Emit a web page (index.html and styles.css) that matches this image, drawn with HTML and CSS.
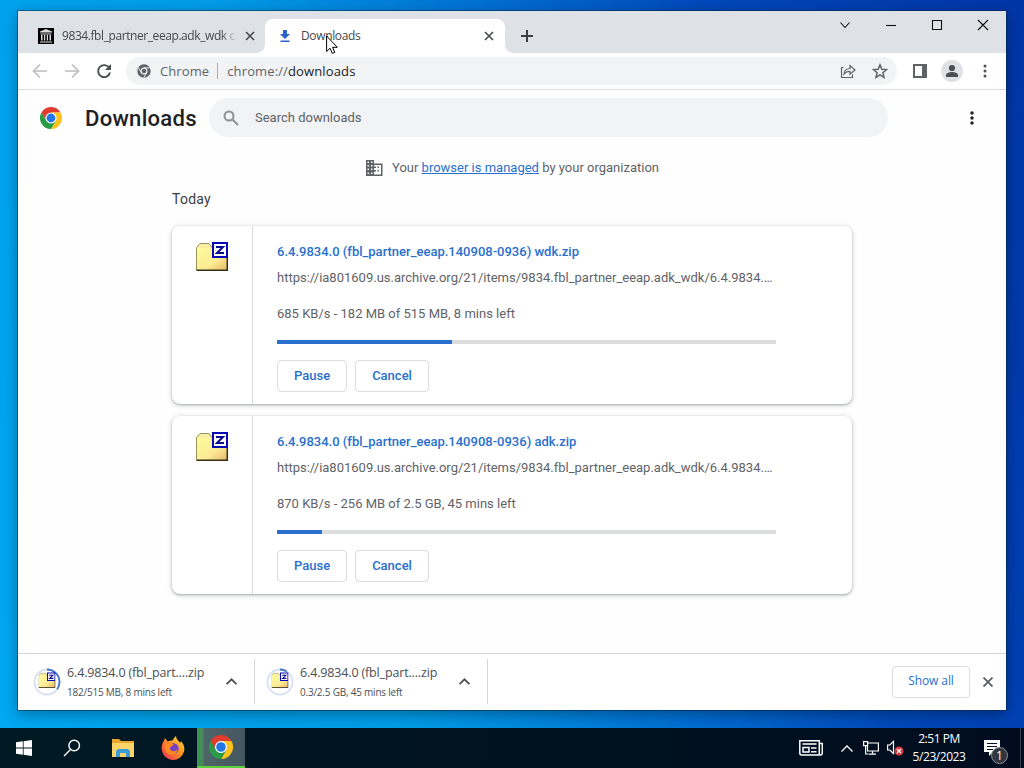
FILE: index.html
```html
<!DOCTYPE html>
<html lang="en">
<head>
<meta charset="UTF-8">
<title>Downloads</title>
<link rel="stylesheet" href="styles.css">
</head>
<body>
<svg class="defs" width="0" height="0">
    <symbol id="chrome" viewBox="0 0 48 48">
        <circle cx="24" cy="24" r="13" fill="#fff"/>
        <path fill="#e33b2e" d="M3.2 12A24 24 0 0 1 44.8 12H24A12 12 0 0 0 13.6 30z"/>
        <path fill="#fcc31e" d="M44.8 12A24 24 0 0 1 24 48L34.4 30A12 12 0 0 0 24 12z"/>
        <path fill="#2a9c46" d="M24 48A24 24 0 0 1 3.2 12L13.6 30A12 12 0 0 0 34.4 30z"/>
        <circle cx="24" cy="24" r="9.6" fill="#2476e8"/>
    </symbol>
    <symbol id="zip" viewBox="0 0 32 32">
        <path fill="#f7efa0" stroke="#99925a" d="M.5 29V6.500L4 2.500h9l3 4v22.500z"/>
        <path fill="url(#folder)" d="M1 7h30v22H1z"/>
        <path fill="none" stroke="#332f16" stroke-width="1.500" d="M.5 29.200h30.800V17"/>
        <path fill="#fff" stroke="#0a0ab4" stroke-width="2" d="M17 2h14v14H17z"/>
        <path fill="none" stroke="#0a0a90" stroke-width="2" d="M20 6h7L21 12h7"/>
    </symbol>
    <linearGradient id="folder" x1="0" y1="0" x2="1" y2="1">
        <stop offset="0" stop-color="#fffb9e"/>
        <stop offset=".6" stop-color="#fbeb94"/>
        <stop offset="1" stop-color="#e8b866"/>
    </linearGradient>
    <linearGradient id="fire" x1="1" y1="0" x2="0" y2="1">
        <stop offset="0" stop-color="#ffe33d"/>
        <stop offset=".45" stop-color="#ff9122"/>
        <stop offset="1" stop-color="#f0255a"/>
    </linearGradient>
</svg>

<div class="window">
    <div class="tabstrip">
        <div class="tab">
            <svg class="favicon" viewBox="0 0 16 16"><path fill="#000" d="M0 0h16v16H0z"/><path fill="#ddd" d="M8 1l6 2.500v1H2v-1zM2.500 5.500h11v1h-11zM3 7h1.500v5.500H3zM6 7h1.200v5.500H6zM8.800 7H10v5.500H8.800zM11.500 7H13v5.500h-1.500zM2 13.500h12v1H2z"/></svg>
            <span class="tab-title faded">9834.fbl_partner_eeap.adk_wdk c</span>
            <svg class="tab-close" viewBox="0 0 10 10"><path d="M1 1l8 8M9 1L1 9"/></svg>
        </div>
        <div class="tab active">
            <svg class="favicon" viewBox="0 0 16 16"><path fill="#2a63c9" d="M6 2h4v4h3L8 11 3 6h3zM3.500 12.500h9V14h-9z"/></svg>
            <span class="tab-title">Downloads</span>
            <svg class="tab-close" viewBox="0 0 10 10"><path d="M1 1l8 8M9 1L1 9"/></svg>
        </div>
        <svg class="new-tab" viewBox="0 0 12 12"><path d="M6 0v12M0 6h12"/></svg>
        <div class="caption">
            <svg viewBox="0 0 12 12"><path d="M1.500 3.500L6 8.500 10.500 3.500"/></svg>
            <svg viewBox="0 0 12 12"><path d="M1 6.500h10"/></svg>
            <svg viewBox="0 0 12 12"><path d="M1.500 1.500h9v9h-9z"/></svg>
            <svg viewBox="0 0 12 12"><path d="M1 1l10 10M11 1L1 11"/></svg>
        </div>
    </div>

    <div class="toolbar">
        <div class="nav">
            <svg class="off" viewBox="0 0 16 16"><path d="M15 8H2M8 1.500L1.500 8 8 14.500"/></svg>
            <svg class="off" viewBox="0 0 16 16"><path d="M1 8h13M8 1.500L14.500 8 8 14.500"/></svg>
            <svg viewBox="0 0 16 16"><path d="M13.300 5A6 6 0 1 0 14 9.500"/><path class="fill" d="M15 1v6H9z"/></svg>
        </div>
        <div class="omnibox">
            <svg class="site" viewBox="0 0 48 48"><circle cx="24" cy="24" r="23" fill="#5f6368"/><path d="M24 13h21M14.500 29.500L4 11.500M33.500 29.500L23 47.500" stroke="#f1f3f4" stroke-width="3"/><circle cx="24" cy="24" r="10" fill="#5f6368" stroke="#f1f3f4" stroke-width="4"/></svg>
            <span class="chip">Chrome</span>
            <span class="url">chrome://<b>downloads</b></span>
            <svg class="share" viewBox="0 0 16 16"><path d="M3.500 4.500h-2v10h11v-3M4 11c.5-4 2.500-5.500 6-5.500V2.500L15 7l-5 4.200V8.300C7.300 8.300 5.500 9 4 11z"/></svg>
            <svg class="star" viewBox="0 0 16 16"><path d="M8 1.800l1.800 4.400 4.700.4-3.600 3.100 1.100 4.600L8 11.800l-4 2.500 1.100-4.600L1.500 6.600l4.700-.4z"/></svg>
        </div>
        <svg class="panel" viewBox="0 0 14 14"><path fill="#5f6368" d="M0 0h14v14H0z"/><path fill="#fff" d="M2 2h7v10H2z"/></svg>
        <svg class="avatar" viewBox="0 0 22 22"><circle cx="11" cy="11" r="11" fill="#dee1e6"/><circle cx="11" cy="8" r="3.100"/><path d="M5 17v-2c0-2 3.500-3 6-3s6 1 6 3v2z"/></svg>
        <svg class="dots" viewBox="0 0 4 14"><circle cx="2" cy="2" r="1.500"/><circle cx="2" cy="7" r="1.500"/><circle cx="2" cy="12" r="1.500"/></svg>
    </div>

    <div class="page">
        <div class="header">
            <svg class="logo"><use href="#chrome"/></svg>
            <h1>Downloads</h1>
            <div class="search">
                <svg viewBox="0 0 16 16"><circle cx="6" cy="6" r="4.500"/><path d="M9.500 9.500l5.500 5.500"/></svg>
                <span>Search downloads</span>
            </div>
            <svg class="dots big" viewBox="0 0 4 14"><circle cx="2" cy="2" r="1.750"/><circle cx="2" cy="7" r="1.750"/><circle cx="2" cy="12" r="1.750"/></svg>
        </div>
        <div class="managed">
            <svg viewBox="0 0 18 16"><path fill="#5f6368" fill-rule="evenodd" d="M1 0h8v3.500h8.500V16H1zM2.500 1.500V3H4V1.500zM6 1.500V3h1.500V1.500zM2.500 5v1.500H4V5zM6 5v1.500h1.500V5zM2.500 8.500V10H4V8.500zM6 8.500V10h1.500V8.500zM2.500 12.500V14H4v-1.500zM6 12.500V14h1.500v-1.500zM9 5v1.500h2V8H9v2h2v1.500H9v3h7V5zM12.500 6.500H14V8h-1.500zM12.500 10H14v1.500h-1.500z"/></svg>
            <span>Your <a>browser is managed</a> by your organization</span>
        </div>
        <div class="list">
            <h3>Today</h3>
            <div class="card">
                <div class="card-icon"><svg><use href="#zip"/></svg></div>
                <div class="card-body">
                    <div class="name">6.4.9834.0 (fbl_partner_eeap.140908-0936) wdk.zip</div>
                    <div class="link">https://ia801609.us.archive.org/21/items/9834.fbl_partner_eeap.adk_wdk/6.4.9834.…</div>
                    <div class="status">685 KB/s - 182 MB of 515 MB, 8 mins left</div>
                    <div class="bar"><div style="width:35%"></div></div>
                    <button>Pause</button><button>Cancel</button>
                </div>
            </div>
            <div class="card">
                <div class="card-icon"><svg><use href="#zip"/></svg></div>
                <div class="card-body">
                    <div class="name">6.4.9834.0 (fbl_partner_eeap.140908-0936) adk.zip</div>
                    <div class="link">https://ia801609.us.archive.org/21/items/9834.fbl_partner_eeap.adk_wdk/6.4.9834.…</div>
                    <div class="status">870 KB/s - 256 MB of 2.5 GB, 45 mins left</div>
                    <div class="bar"><div style="width:9%"></div></div>
                    <button>Pause</button><button>Cancel</button>
                </div>
            </div>
        </div>
    </div>

    <div class="shelf">
        <div class="shelf-item">
            <svg class="ring" viewBox="0 0 28 28"><circle cx="14" cy="14" r="12.500"/><circle class="done" cx="14" cy="14" r="12.500" pathLength="100" stroke-dasharray="35 100" transform="rotate(-90 14 14)"/><use href="#zip" x="5.500" y="4" width="17" height="17"/></svg>
            <div class="shelf-text"><div class="s-name">6.4.9834.0 (fbl_part....zip</div><div class="s-info">182/515 MB, 8 mins left</div></div>
            <svg class="chevron" viewBox="0 0 10 6"><path d="M.5 5.500L5 1l4.500 4.500"/></svg>
        </div>
        <div class="shelf-item">
            <svg class="ring" viewBox="0 0 28 28"><circle cx="14" cy="14" r="12.500"/><circle class="done" cx="14" cy="14" r="12.500" pathLength="100" stroke-dasharray="9 100" transform="rotate(-90 14 14)"/><use href="#zip" x="5.500" y="4" width="17" height="17"/></svg>
            <div class="shelf-text"><div class="s-name">6.4.9834.0 (fbl_part....zip</div><div class="s-info">0.3/2.5 GB, 45 mins left</div></div>
            <svg class="chevron" viewBox="0 0 10 6"><path d="M.5 5.500L5 1l4.500 4.500"/></svg>
        </div>
        <button class="show-all">Show all</button>
        <svg class="shelf-close" viewBox="0 0 10 10"><path d="M.5 .5l9 9M9.500 .5l-9 9"/></svg>
    </div>
</div>

<div class="taskbar">
    <div class="task"><svg width="16" height="16" viewBox="0 0 16 16"><path fill="#fff" d="M0 2.300l6.800-1v6.200H0zM7.600 1.200L16 0v7.500H7.600zM0 8.400h6.800v6.300L0 13.700zM7.600 8.400H16V16l-8.400-1.200z"/></svg></div>
    <div class="task"><svg width="18" height="18" viewBox="0 0 18 18"><path fill="none" stroke="#fff" stroke-width="1.400" d="M7 11L1 17M16.500 6.500a5.300 5.300 0 1 1-10.600 0 5.300 5.300 0 0 1 10.600 0z"/></svg></div>
    <div class="task wide"><svg width="22" height="18" viewBox="0 0 22 18"><path fill="#e9a82d" d="M0 0h7l2 2h13v16H0z"/><path fill="#fad468" d="M0 4h22v14H0z"/><path fill="#3c9bd9" d="M4 18v-6l2-2h10l2 2v6h-4v-4H8v4z"/></svg></div>
    <div class="task"><svg width="24" height="24" viewBox="0 0 24 24"><path fill="url(#fire)" d="M11.500 4.500C12.500 2 14 1 15 0c0 3 2.500 4.500 4.200 7l.8-2c3 3.500 4 7 3 10.500A11.300 11.300 0 0 1 1 15C0 11 1 7.500 3 4.500L4 2l2.800 3.500c1.500-.8 3-1 4.700-1z"/><circle cx="12.500" cy="12.500" r="5.200" fill="#7541c8"/><path fill="#ff8a20" d="M4 8.500c2.500-1.500 4-.8 7-.5 2 0 1.500 1.800-.5 2.300-1.500.5-2 2-1 3.500 1.500 2 4.500 2 7-.3-.5 4-4.500 6-8.500 4.500S3 13 4 8.500z"/></svg></div>
    <div class="task current"><svg width="24" height="24"><use href="#chrome"/></svg></div>
    <div class="tray">
        <svg width="24" height="16" viewBox="0 0 24 16"><path fill="none" stroke="#fff" stroke-width="1.500" d="M.8 .8h19.500V15H2.500Q.8 15 .8 13zM20.300 3.500h3V13q0 2-2 2h-2M3.500 4h14M4 7.500h6v4.500H4zM12 8h5.500M12 11.800h5.500"/></svg>
        <svg class="up" width="12" height="7" viewBox="0 0 12 7"><path fill="none" stroke="#fff" stroke-width="1.300" d="M.5 6.500L6 1l5.500 5.500"/></svg>
        <svg class="net" width="16" height="14" viewBox="0 0 16 14"><path fill="none" stroke="#fff" stroke-width="1.200" d="M5 2h10.400v8H4.500V5M9.500 10v3M6 13.200h7M.6 .6h4v4h-4zM2.600 5v8h3"/></svg>
        <svg class="sound" width="17" height="16" viewBox="0 0 17 16"><path fill="none" stroke="#fff" stroke-width="1.200" d="M.6 5h2.200L6.500 1.500v12L2.800 10H.6z"/><circle cx="12" cy="11" r="4.500" fill="#d93a41"/><path stroke="#fff" stroke-width="1.200" d="M10 9l4 4M14 9l-4 4"/></svg>
        <div class="clock"><div>2:51 PM</div><div>5/23/2023</div></div>
        <div class="notify">
            <svg width="16" height="16" viewBox="0 0 16 16"><path fill="#fff" d="M0 0h16v12H9l-4 4v-4H0z"/><path stroke="#00101d" d="M3 3.500h10M3 6.500h10M3 9.500h6"/></svg>
            <span>1</span>
        </div>
    </div>
</div>

<svg class="pointer" viewBox="0 0 12 19"><path fill="#fff" stroke="#000" d="M.6 1v15.500L4 13.200l2.300 5.200 2.500-1-2.300-5.100h4.800z"/></svg>
</body>
</html>
```
FILE: styles.css
```css
* {
    box-sizing: border-box;
}
body {
    margin: 0;
    width: 1024px;
    height: 768px;
    overflow: hidden;
    display: flex;
    flex-direction: column;
    background: linear-gradient(75deg, #00a8f2 0%, #009ce8 34%, #0070d2 56%, #0048ba 74%, #0035a6 100%);
    font-family: Roboto, sans-serif;
    font-size: 13px;
    color: #5f6368;
}
svg {
    display: block;
    flex: none;
}
.defs {
    position: absolute;
}
.window {
    height: 699px;
    margin: 11px 18px 18px;
    display: flex;
    flex-direction: column;
    background: #fff;
    box-shadow: 0 0 0 1px rgba(0,35,70,.5), 0 4px 14px rgba(0,0,0,.35);
}

/* tabs */
.tabstrip {
    height: 42px;
    display: flex;
    background: #dee1e6;
    font-family: "Open Sans", sans-serif;
    font-size: 12px;
}
.tab {
    height: 34px;
    margin-top: 8px;
    display: flex;
    align-items: center;
    width: 247px;
    padding: 0 10px 0 20px;
    color: #45494d;
}
.tab.active {
    position: relative;
    width: 240px;
    padding: 0 11px 0 12px;
    background: #fff;
    border-radius: 8px 8px 0 0;
}
.tab.active::before,
.tab.active::after {
    content: "";
    position: absolute;
    bottom: 0;
    width: 8px;
    height: 8px;
}
.tab.active::before {
    left: -8px;
    background: radial-gradient(circle at 0 0, transparent 7.5px, #fff 8px);
}
.tab.active::after {
    right: -8px;
    background: radial-gradient(circle at 100% 0, transparent 7.5px, #fff 8px);
}
.favicon {
    width: 16px;
    height: 16px;
    margin-right: 8px;
}
.tab-title {
    flex: 1;
    padding-bottom: 2px;
    white-space: nowrap;
    overflow: hidden;
    letter-spacing: -.35px;
}
.faded {
    letter-spacing: -.42px;
    -webkit-mask-image: linear-gradient(90deg, #000 91%, transparent);
    mask-image: linear-gradient(90deg, #000 91%, transparent);
}
.tab-close {
    width: 10px;
    height: 10px;
    margin-left: 8px;
    stroke: #45494d;
    stroke-width: 1.6;
}
.new-tab {
    width: 12px;
    height: 12px;
    margin: 19px 0 0 16px;
    stroke: #3c4043;
    stroke-width: 2;
}
.caption {
    margin: 8px 17px 0 auto;
    display: flex;
    gap: 34px;
}
.caption svg {
    width: 12px;
    height: 12px;
    fill: none;
    stroke: #111;
    stroke-width: 1.1;
}

/* toolbar */
.toolbar {
    height: 37px;
    display: flex;
    align-items: center;
    padding: 0 19px 0 14px;
    border-bottom: 1px solid #d9dbde;
    font-family: "Open Sans", sans-serif;
}
.nav {
    display: flex;
    gap: 16px;
    margin-right: 14px;
}
.nav svg {
    width: 16px;
    height: 16px;
    fill: none;
    stroke: #4b4f53;
    stroke-width: 1.9;
}
.nav .off {
    stroke: #bbbdc0;
    stroke-width: 1.6;
}
.nav .fill {
    fill: #4b4f53;
    stroke: none;
}
.omnibox {
    width: 771px;
    height: 28px;
    display: flex;
    align-items: center;
    padding: 0 9px 0 11px;
    border-radius: 14px;
    background: #f1f3f4;
}
.site {
    width: 14px;
    height: 14px;
    margin-right: 9px;
}
.chip {
    padding-right: 8px;
    border-right: 1px solid #a9acb0;
    line-height: 16px;
    letter-spacing: .1px;
}
.url {
    flex: 1;
    margin-left: 9px;
    letter-spacing: .13px;
}
.url b {
    font-weight: 400;
    color: #202124;
}
.share,
.star {
    width: 16px;
    height: 16px;
    fill: none;
    stroke: #5f6368;
    stroke-width: 1.2;
}
.star {
    margin-left: 16px;
    stroke-width: 1.5;
}
.panel {
    width: 14px;
    height: 14px;
    margin-left: 16px;
}
.avatar {
    width: 22px;
    height: 22px;
    margin-left: 14px;
    fill: #4d5156;
}
.dots {
    width: 4px;
    height: 14px;
    margin-left: auto;
    fill: #4d5156;
}

/* downloads page */
.page {
    flex: 1;
    background: #fefefe;
}
.header {
    height: 56px;
    display: flex;
    align-items: center;
    padding: 0 32px 0 22px;
}
.logo {
    width: 22px;
    height: 22px;
    margin-right: 23px;
}
h1 {
    width: 124px;
    margin: 0;
    font-size: 22.1px;
    font-weight: 500;
    letter-spacing: .25px;
    color: #202124;
}
.search {
    width: 679px;
    height: 39px;
    display: flex;
    align-items: center;
    padding-left: 14px;
    margin-bottom: 1px;
    border-radius: 20px;
    background: #f1f3f4;
}
.search svg {
    width: 16px;
    height: 16px;
    margin-right: 16px;
    fill: none;
    stroke: #8d9195;
    stroke-width: 2;
}
.search span {
    padding-bottom: 1px;
}
.dots.big {
    fill: #202124;
}
.managed {
    height: 44px;
    display: flex;
    align-items: center;
    justify-content: center;
    gap: 9px;
}
.managed svg {
    width: 18px;
    height: 16px;
}
.managed span {
    padding-bottom: 2px;
}
.managed a {
    color: #296fce;
    text-decoration: underline;
}
.list {
    width: 680px;
    margin: 0 auto;
}
h3 {
    height: 36px;
    margin: 0;
    font-size: 14px;
    font-weight: 400;
    line-height: 19px;
    letter-spacing: .25px;
    color: #3c4043;
}
.card {
    height: 178px;
    display: flex;
    margin-bottom: 12px;
    background: #fff;
    border-radius: 8px;
    box-shadow: 0 1px 2px rgba(60,64,67,.3), 0 1px 4px 1px rgba(60,64,67,.18);
}
.card-icon {
    width: 81px;
    padding: 15px 0 0 24px;
    border-right: 1px solid #dadce0;
}
.card-icon svg {
    width: 32px;
    height: 32px;
}
.card-body {
    width: 523px;
    padding: 16px 0 0 24px;
    white-space: nowrap;
}
.name {
    height: 26px;
    line-height: 20px;
    font-weight: 500;
    color: #296fce;
}
.link {
    height: 36px;
    line-height: 20px;
}
.status {
    height: 36px;
    line-height: 20px;
}
.bar {
    height: 4px;
    margin-bottom: 16px;
    background: #dcdddd;
}
.bar div {
    height: 4px;
    background: #296fce;
}
button {
    height: 32px;
    margin: 0 8px 0 0;
    padding: 0 16px 2px;
    border: 1px solid #dadce0;
    border-radius: 4px;
    background: #fff;
    font: 500 13px Roboto, sans-serif;
    color: #296fce;
}

/* download shelf */
.shelf {
    height: 57px;
    display: flex;
    align-items: center;
    padding-bottom: 1px;
    border-top: 1px solid #d3d5d8;
    font-family: "Open Sans", sans-serif;
}
.shelf-item {
    width: 233px;
    height: 45px;
    display: flex;
    align-items: center;
    padding-left: 11px;
    border-right: 1px solid #d3d5d8;
}
.shelf-item:first-child {
    width: 237px;
    padding-left: 15px;
}
.ring {
    width: 28px;
    height: 28px;
    margin-right: 6px;
    fill: none;
}
.ring > circle {
    stroke: #d7dff0;
    stroke-width: 1.8;
}
.ring > .done {
    stroke: #4175c6;
}
.shelf-text {
    width: 159px;
    white-space: nowrap;
}
.s-name {
    height: 20px;
    line-height: 19px;
    font-size: 12.5px;
    letter-spacing: -.15px;
    color: #4b4f53;
}
.s-info {
    font-size: 10px;
    line-height: 18px;
    letter-spacing: -.22px;
    color: #4b4f53;
}
.chevron {
    width: 11px;
    height: 7px;
    fill: none;
    stroke: #4b4f53;
    stroke-width: 1.6;
}
.show-all {
    width: 78px;
    margin: 0 13px 0 auto;
    padding: 0 0 2px;
    font: 12px "Open Sans", sans-serif;
    letter-spacing: -.1px;
}
.shelf-close {
    width: 10px;
    height: 10px;
    margin-right: 13px;
    stroke: #5a5e62;
    stroke-width: 1.8;
}

/* taskbar */
.taskbar {
    height: 40px;
    display: flex;
    background: linear-gradient(90deg, #001a24, #00121f 50%, #000d20);
    color: #fff;
}
.task {
    width: 48px;
    display: flex;
    align-items: center;
    justify-content: center;
}
.wide {
    width: 53px;
}
.task.current {
    background: linear-gradient(90deg, #3a9650 0, #478a5a 5px, #4c6468 8px, #45555f 100%);
    border-bottom: 2px solid #5bd03d;
}
.tray {
    flex: 1;
    display: flex;
    align-items: center;
    justify-content: flex-end;
    margin-right: 3px;
    padding-right: 20px;
    border-right: 1px solid #39434f;
}
.up {
    margin-left: 18px;
}
.net {
    margin-left: 10px;
}
.sound {
    margin-left: 8px;
}
.clock {
    width: 70px;
    margin-right: 2px;
    font: 12px/18px "Open Sans", sans-serif;
    letter-spacing: -.45px;
    text-align: center;
}
.notify {
    position: relative;
    margin-left: 8px;
}
.notify span {
    position: absolute;
    left: 7px;
    top: 7px;
    width: 17px;
    height: 17px;
    border: 1px solid #8b9299;
    border-radius: 50%;
    background: #30363c;
    font: 12px/15px "Open Sans", sans-serif;
    text-align: center;
}
.pointer {
    position: absolute;
    left: 326px;
    top: 35px;
    width: 12px;
    height: 19px;
}
```
